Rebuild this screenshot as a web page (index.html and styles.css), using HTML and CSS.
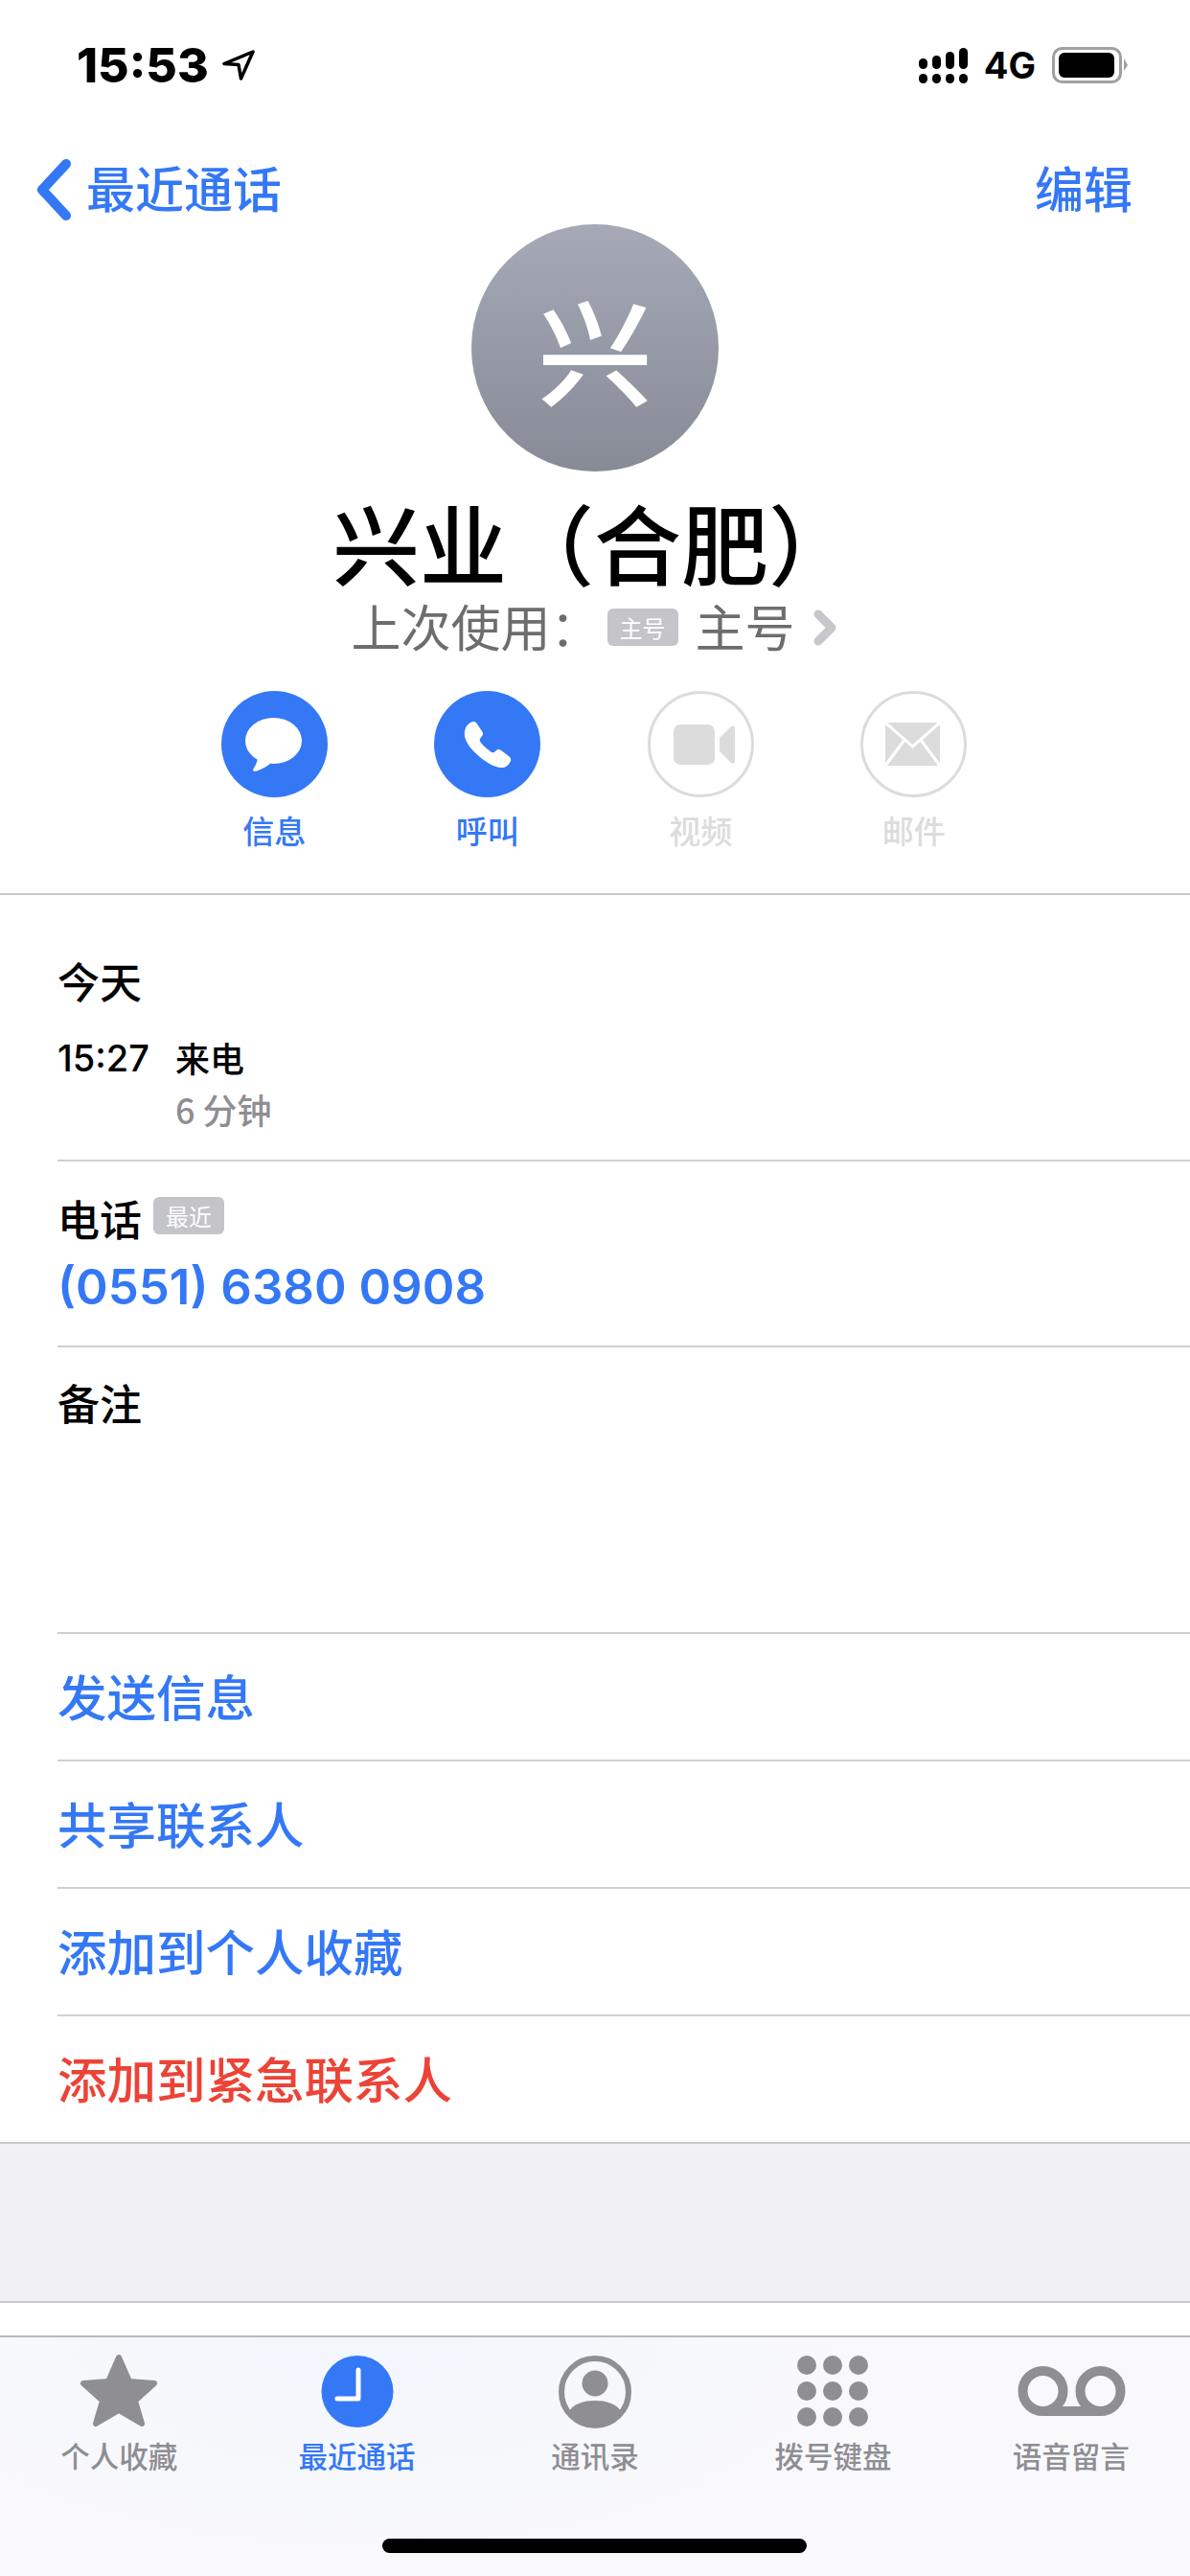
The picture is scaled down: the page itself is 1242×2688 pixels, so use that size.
FILE: index.html
```html
<!DOCTYPE html>
<html lang="zh-CN">
<head>
  <meta charset="UTF-8">
  <title>兴业（合肥）</title>
  <link rel="stylesheet" href="styles.css">
</head>
<body>
  <div class="status-bar">
    <div class="status-left">
      <span class="status-time">15:53</span>
      <svg class="status-arrow" width="36" height="34" viewBox="0 0 36 34"><path d="M33 3 L3 15.500 L18 16.500 L20.500 31 Z" fill="none" stroke="#000" stroke-width="3.500" stroke-linejoin="round"/></svg>
    </div>
    <div class="status-right">
      <svg width="51" height="37" viewBox="0 0 51 37" fill="#000">
        <rect x="0" y="27" width="9" height="10" rx="4.500"/>
        <rect x="0" y="11" width="9" height="11" rx="4.500"/>
        <rect x="14" y="27" width="9" height="10" rx="4.500"/>
        <rect x="14" y="8" width="9" height="14" rx="4.500"/>
        <rect x="28" y="27" width="9" height="10" rx="4.500"/>
        <rect x="28" y="4" width="9" height="18" rx="4.500"/>
        <rect x="42" y="27" width="9" height="10" rx="4.500"/>
        <rect x="42" y="0" width="9" height="22" rx="4.500"/>
      </svg>
      <span class="status-net">4G</span>
      <svg width="79" height="38" viewBox="0 0 79 38">
        <rect x="1.500" y="1.500" width="70" height="35" rx="9" fill="none" stroke="#a0a0a0" stroke-width="3"/>
        <rect x="7" y="6" width="58" height="26" rx="6" fill="#000"/>
        <path d="M75 12 L79 19 L75 25 Z" fill="#a0a0a0"/>
      </svg>
    </div>
  </div>

  <div class="nav-bar">
    <div class="nav-back">
      <svg width="40" height="66" viewBox="0 0 40 66"><path d="M33 6 L8 33 L33 60" fill="none" stroke="#3478f6" stroke-width="10" stroke-linecap="round" stroke-linejoin="round"/></svg>
      <span>最近通话</span>
    </div>
    <span class="nav-edit">编辑</span>
  </div>

  <div class="contact-head">
    <div class="avatar">兴</div>
    <h1 class="contact-name">兴业（合肥）</h1>
    <div class="last-used">
      <span>上次使用：</span>
      <span class="sim-badge">主号</span>
      <span>主号</span>
      <svg class="last-chevron" width="26" height="38" viewBox="0 0 26 38"><path d="M6 5 L20 19 L6 33" fill="none" stroke="#c7c7cc" stroke-width="9" stroke-linecap="round" stroke-linejoin="round"/></svg>
    </div>
    <div class="actions">
      <div class="action">
        <div class="action-circle">
          <svg width="111" height="111" viewBox="0 0 111 111"><ellipse cx="54.500" cy="52" rx="29.500" ry="24" fill="#fff"/><path d="M38 71 C37 75 35 79 33 82 C33 84 35 84 37 83.500 C42 82 47 79 51 76 Z" fill="#fff"/></svg>
        </div>
        <span class="action-label">信息</span>
      </div>
      <div class="action">
        <div class="action-circle">
          <svg width="111" height="111" viewBox="0 0 111 111"><path d="M38 33 Q41 31 44 33 L50 42 Q52 45 50 47 L48 50 Q47 52 49 54 C52 58 56 61 60 64 Q62 65 64 63 L65 62 Q67 60 70 62 L78 68 Q82 71 79 75 Q76 80 71 80 C60 80 45 68 37 58 C33 52 31 47 32 42 Q33 36 38 33 Z" fill="#fff"/></svg>
        </div>
        <span class="action-label">呼叫</span>
      </div>
      <div class="action action-off">
        <div class="action-circle">
          <svg width="105" height="105" viewBox="3 3 105 105"><rect x="27" y="35" width="43" height="42" rx="7" fill="#dcdcdc"/><path d="M75 49 L87 37 Q91 35 91 39 V73 Q91 77 87 75 L75 63 Z" fill="#dcdcdc"/></svg>
        </div>
        <span class="action-label">视频</span>
      </div>
      <div class="action action-off">
        <div class="action-circle">
          <svg width="105" height="105" viewBox="3 3 105 105"><rect x="26" y="33" width="57" height="45" rx="2" fill="#dcdcdc"/><path d="M26 33 L54.500 58 L83 33 M26 78 L46 51 M83 78 L63 51" fill="none" stroke="#fff" stroke-width="3"/></svg>
        </div>
        <span class="action-label">邮件</span>
      </div>
    </div>
  </div>

  <div class="info-list">
    <div class="info-row recents">
      <div class="row-title">今天</div>
      <div class="call-line">
        <span class="call-time">15:27</span>
        <div>
          <div class="call-type">来电</div>
          <div class="call-length">6 分钟</div>
        </div>
      </div>
    </div>
    <div class="info-row phone">
      <div class="phone-title">
        <span class="row-title">电话</span>
        <span class="recent-badge">最近</span>
      </div>
      <div class="phone-number">(0551) 6380 0908</div>
    </div>
    <div class="info-row notes">
      <div class="row-title">备注</div>
    </div>
    <div class="info-row link-row">发送信息</div>
    <div class="info-row link-row">共享联系人</div>
    <div class="info-row link-row">添加到个人收藏</div>
    <div class="info-row link-row danger">添加到紧急联系人</div>
  </div>

  <div class="gray-gap"></div>
  <div class="white-gap"></div>

  <div class="tab-bar">
    <div class="tab">
      <svg width="120" height="80" viewBox="0 0 120 80"><path d="M60 6 L71 31 L97 33 L77 51 L84 75 L60 61 L36 75 L43 51 L23 33 L49 31 Z" fill="#8e8e93" stroke="#8e8e93" stroke-width="6" stroke-linejoin="round"/></svg>
      <span class="tab-label">个人收藏</span>
    </div>
    <div class="tab tab-active">
      <svg width="120" height="80" viewBox="0 0 120 80"><circle cx="60" cy="41.500" r="37.500" fill="#3478f6"/><path d="M61 19 V49 H39" fill="none" stroke="#fff" stroke-width="5" stroke-linecap="round" stroke-linejoin="round"/></svg>
      <span class="tab-label">最近通话</span>
    </div>
    <div class="tab">
      <svg width="120" height="80" viewBox="0 0 120 80"><circle cx="60" cy="42" r="35" fill="none" stroke="#8e8e93" stroke-width="6"/><circle cx="60" cy="33" r="13.500" fill="#8e8e93"/><path d="M32 63 C38 54 48 51 60 51 C72 51 82 54 88 63 C81 72 71 77 60 77 C49 77 39 72 32 63 Z" fill="#8e8e93"/></svg>
      <span class="tab-label">通讯录</span>
    </div>
    <div class="tab">
      <svg width="120" height="80" viewBox="0 0 120 80" fill="#8e8e93">
        <circle cx="33" cy="14" r="10"/><circle cx="60" cy="14" r="10"/><circle cx="87" cy="14" r="10"/>
        <circle cx="33" cy="41" r="10"/><circle cx="60" cy="41" r="10"/><circle cx="87" cy="41" r="10"/>
        <circle cx="33" cy="68" r="10"/><circle cx="60" cy="68" r="10"/><circle cx="87" cy="68" r="10"/>
      </svg>
      <span class="tab-label">拨号键盘</span>
    </div>
    <div class="tab">
      <svg width="120" height="80" viewBox="0 0 120 80"><path d="M30.500 62 H90.500 M30.500 62 A21 21 0 1 1 30.500 20 A21 21 0 0 1 30.500 62 Z M90.500 62 A21 21 0 1 1 90.500 20 A21 21 0 0 1 90.500 62 Z" fill="none" stroke="#8e8e93" stroke-width="10"/></svg>
      <span class="tab-label">语音留言</span>
    </div>
    <div class="home-indicator"></div>
  </div>
</body>
</html>
```

FILE: styles.css
```css
* {
  box-sizing: border-box;
}

html, body {
  margin: 0;
  padding: 0;
}

body {
  width: 1242px;
  height: 2688px;
  overflow: hidden;
  background-color: #fff;
  font-family: "Noto Sans CJK SC", "Liberation Sans", sans-serif;
  color: #000;
}

.status-bar {
  display: flex;
  justify-content: space-between;
  align-items: center;
  height: 136px;
  padding: 0 65px 0 80px;
}

.status-left {
  display: flex;
  align-items: center;
  gap: 13px;
}

.status-time {
  font-family: Inter, "Liberation Sans", sans-serif;
  font-size: 50px;
  font-weight: 800;
  line-height: 56px;
}

.status-right {
  display: flex;
  align-items: center;
  gap: 17px;
}

.status-net {
  font-family: Inter, "Liberation Sans", sans-serif;
  font-size: 38px;
  font-weight: 700;
  line-height: 44px;
}

.nav-bar {
  display: flex;
  justify-content: space-between;
  align-items: center;
  height: 98px;
  padding: 26px 60px 0 36px;
  color: #3478f6;
  font-size: 51px;
  font-weight: 500;
}

.nav-back {
  display: flex;
  align-items: center;
  gap: 14px;
}

.nav-back span,
.nav-edit {
  padding-bottom: 6px;
}

.contact-head {
  display: flex;
  flex-direction: column;
  align-items: center;
  height: 700px;
  border-bottom: 2px solid #c8c8cc;
}

.avatar {
  display: flex;
  align-items: center;
  justify-content: center;
  width: 258px;
  height: 258px;
  border-radius: 50%;
  background: linear-gradient(#a6a9b6, #868b96);
  color: #fff;
  font-size: 120px;
  font-weight: 500;
  line-height: 258px;
}

.contact-name {
  height: 120px;
  margin: 12px 0 6px;
  font-size: 91px;
  font-weight: 500;
  line-height: 120px;
  transform: translateX(-1px);
}

.last-used {
  display: flex;
  align-items: center;
  height: 50px;
  color: #6d6d6d;
  font-size: 52px;
  line-height: 50px;
  transform: translate(-1px, -2px);
}

.sim-badge {
  width: 74px;
  height: 39px;
  margin: 3px 18px 0 7px;
  border-radius: 6px;
  background-color: #c4c4c9;
  color: #fff;
  font-size: 24px;
  line-height: 39px;
  text-align: center;
}

.last-chevron {
  margin: 3px 0 0 18px;
}

.actions {
  display: flex;
  margin-top: 41px;
  padding-right: 2px;
}

.action {
  display: flex;
  flex-direction: column;
  align-items: center;
  width: 222.5px;
}

.action-circle {
  width: 111px;
  height: 111px;
  border-radius: 50%;
  background-color: #3478f6;
}

.action-label {
  margin-top: 12px;
  color: #3478f6;
  font-size: 33px;
  font-weight: 500;
  line-height: 44px;
}

.action-off .action-circle {
  border: 3px solid #dcdcdc;
  background-color: #fff;
}

.action-off .action-label {
  color: #dcdcdc;
}

.info-list {
  padding-left: 60px;
}

.info-row {
  border-bottom: 2px solid #d0d0d4;
}

.row-title {
  font-size: 44px;
  font-weight: 500;
  line-height: 60px;
}

.recents {
  height: 278px;
  padding-top: 59px;
}

.call-line {
  display: flex;
  margin-top: 26px;
  font-size: 36px;
  font-weight: 500;
  line-height: 50px;
}

.call-time {
  width: 123px;
  font-family: Inter, "Liberation Sans", sans-serif;
  font-size: 38px;
  font-weight: 500;
}

.call-type {
  margin-top: -1px;
}

.call-length {
  margin-top: 4px;
  color: #8e8e93;
}

.phone {
  height: 194px;
  padding-top: 29px;
}

.phone-title {
  display: flex;
  align-items: flex-start;
  gap: 12px;
}

.recent-badge {
  width: 74px;
  height: 39px;
  margin-top: 8px;
  border-radius: 6px;
  background-color: #c4c4c9;
  color: #fff;
  font-size: 24px;
  line-height: 39px;
  text-align: center;
}

.phone-number {
  margin-top: 12px;
  color: #3478f6;
  font-family: Inter, "Liberation Sans", sans-serif;
  font-size: 51px;
  font-weight: 600;
  line-height: 60px;
}

.notes {
  height: 299px;
  padding-top: 27px;
}

.link-row {
  height: 133px;
  color: #3478f6;
  font-size: 51.5px;
  font-weight: 500;
  line-height: 128px;
}

.danger {
  color: #ec4337;
}

.info-row:last-child {
  margin-left: -60px;
  padding-left: 60px;
  border-bottom-color: #c8c8cc;
}

.gray-gap {
  height: 166px;
  border-bottom: 2px solid #c8c8ce;
  background-color: #f0f0f5;
}

.white-gap {
  height: 36px;
  border-bottom: 2px solid #b8b8bd;
  background-color: #fff;
}

.tab-bar {
  position: relative;
  display: flex;
  height: 249px;
  padding-top: 15px;
  background: radial-gradient(ellipse 500px 220px at 380px 0, #f2f6fd, rgba(242, 246, 253, 0)), #f9f9fb;
}

.tab {
  display: flex;
  flex: 1;
  flex-direction: column;
  align-items: center;
}

.tab-label {
  margin-top: 6px;
  color: #8e8e93;
  font-size: 30.5px;
  font-weight: 500;
  line-height: 44px;
}

.tab-active .tab-label {
  color: #3478f6;
}

.home-indicator {
  position: absolute;
  left: 399px;
  top: 210px;
  width: 443px;
  height: 15px;
  border-radius: 8px;
  background-color: #000;
}
```
